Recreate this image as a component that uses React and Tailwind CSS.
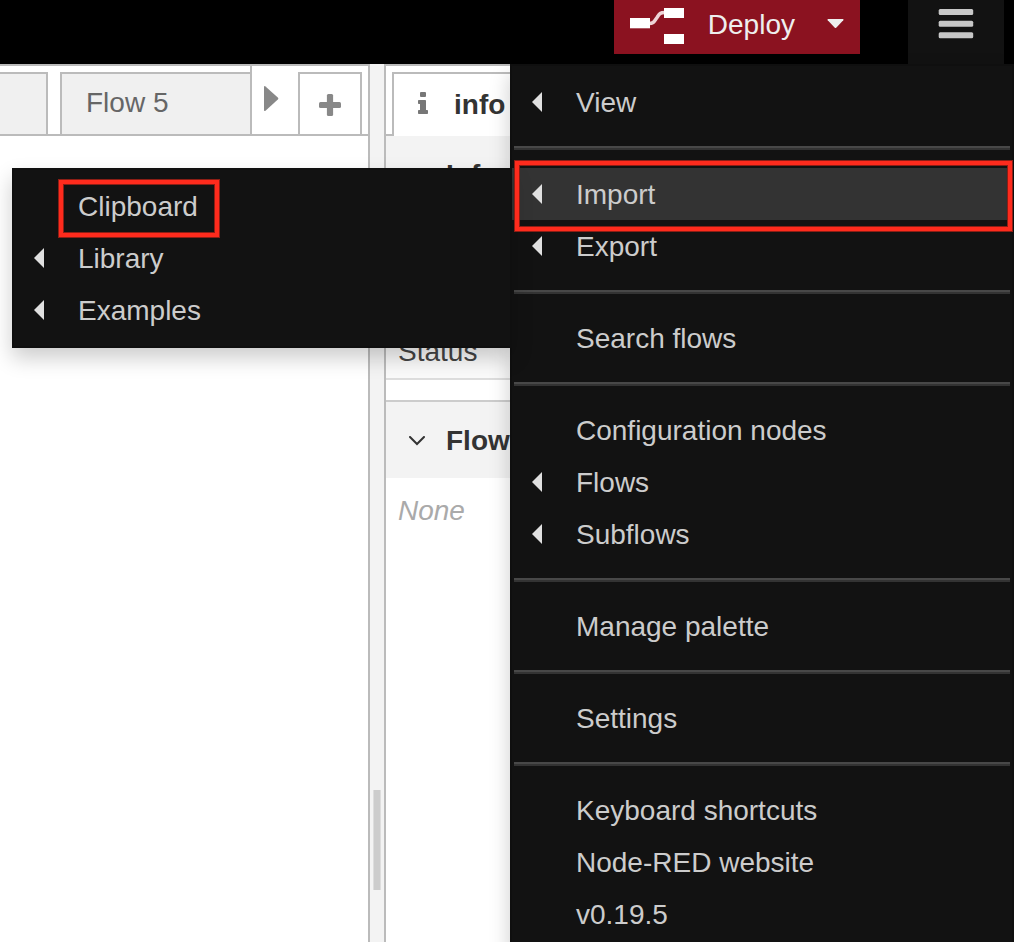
import React from "react";

function LeftArrow() {
  return (
    <svg width="10" height="20" viewBox="0 0 10 20" className="shrink-0" aria-hidden="true">
      <path d="M10 0V20L0 10Z" fill="#e0e0e0" />
    </svg>
  );
}

function MenuItem({ label, arrow, active, marked, children }) {
  return (
    <li role="none" className="relative">
      <button
        type="button"
        role="menuitem"
        className={
          active
            ? "flex h-[52px] w-full items-center bg-[#333333] pl-5 text-left"
            : "flex h-[52px] w-full items-center pl-5 text-left"
        }
      >
        <span className="flex w-11 shrink-0">{arrow && <LeftArrow />}</span>
        <span className="pt-0.5 whitespace-nowrap">{label}</span>
      </button>
      {marked}
      {children}
    </li>
  );
}

function Divider() {
  return (
    <li role="separator" className="mx-0.5 my-[18px] h-1 border-t-2 border-[#484848] bg-[#333333]" />
  );
}

const menuBox = "border-2 border-[#0f0f0f] bg-[#121212] py-2.5 shadow-[0_10px_20px_rgba(0,0,0,0.2)]";

const highlight =
  "pointer-events-none absolute border-4 border-[#fe2b1d] shadow-[0_0_0_1px_#8c1e15,inset_0_0_0_1px_#8c1e15]";

function ImportSubmenu() {
  return (
    <ul role="menu" aria-label="Import" className={"absolute top-0 right-full w-[500px] " + menuBox}>
      <MenuItem label="Clipboard" marked={<span className={highlight + " top-0 left-[45px] h-[57px] w-40"} />} />
      <MenuItem label="Library" arrow />
      <MenuItem label="Examples" arrow />
    </ul>
  );
}

function MainMenu() {
  return (
    <ul
      role="menu"
      aria-label="Main menu"
      className={"absolute top-16 right-0 z-10 w-[504px] text-[#cccccc] " + menuBox}
    >
      <MenuItem label="View" arrow />
      <Divider />
      <MenuItem
        label="Import"
        arrow
        active
        marked={<span className={highlight + " -top-[7px] right-0 left-[3px] z-10 h-[70px]"} />}
      >
        <ImportSubmenu />
      </MenuItem>
      <MenuItem label="Export" arrow />
      <Divider />
      <MenuItem label="Search flows" />
      <Divider />
      <MenuItem label="Configuration nodes" />
      <MenuItem label="Flows" arrow />
      <MenuItem label="Subflows" arrow />
      <Divider />
      <MenuItem label="Manage palette" />
      <Divider />
      <MenuItem label="Settings" />
      <Divider />
      <MenuItem label="Keyboard shortcuts" />
      <MenuItem label="Node-RED website" />
      <MenuItem label="v0.19.5" />
    </ul>
  );
}

function Header() {
  return (
    <header className="flex h-16 shrink-0 items-start justify-end bg-black pr-2.5">
      <button type="button" className="flex h-[54px] items-center bg-[#8b1220] px-4 pb-1.5 text-[#eeeeee]">
        <svg width="54" height="40" viewBox="0 0 54 40" aria-hidden="true">
          <path d="M19 19.500C24 19.500 24 17.500 27 13.500C29.500 9.500 30 8.500 35 8.500" fill="none" stroke="#eed3d6" strokeWidth="3.500" />
          <rect x="0" y="14" width="20" height="10.300" fill="#fff" />
          <rect x="34" y="4" width="20" height="10" fill="#fff" />
          <rect x="34" y="30" width="20" height="10" fill="#fff" />
        </svg>
        <span className="ml-6 pt-0.5">Deploy</span>
        <svg width="17" height="10" viewBox="0 0 17 10" className="ml-8" aria-hidden="true">
          <path d="M1 0H16Q17 .3 16.300 1.200L9.200 8.800Q8.500 9.400 7.800 8.800L.7 1.200Q0 .3 1 0Z" fill="#eee" />
        </svg>
      </button>
      <button
        type="button"
        aria-label="Menu"
        className="ml-12 flex h-16 w-24 items-center justify-center bg-[#121212] pb-4"
      >
        <svg width="36" height="30" viewBox="0 0 36 30" fill="#c7c7c7" aria-hidden="true">
          <rect x="0.700" y="0" width="34.500" height="6" rx="1.500" />
          <rect x="0.700" y="11.700" width="34.500" height="6" rx="1.500" />
          <rect x="0.700" y="23.200" width="34.500" height="6" rx="1.500" />
        </svg>
      </button>
    </header>
  );
}

function Workspace() {
  return (
    <main className="flex min-w-0 flex-1 flex-col border-t-2 border-r-2 border-[#bbbbbb]">
      <div className="flex h-[70px] border-b-2 border-[#bbbbbb]">
        <button
          type="button"
          aria-label="Previous flow"
          className="mt-1.5 w-12 border-t-2 border-r-2 border-[#bbbbbb] bg-[#f0f0f0]"
        />
        <button
          type="button"
          className="mt-1.5 ml-3 flex min-w-0 flex-1 items-center border-t-2 border-l-2 border-[#bbbbbb] bg-[#f0f0f0] pb-0.5 pl-6 text-[#666666]"
        >
          Flow 5
        </button>
        <button
          type="button"
          aria-label="Scroll tabs right"
          className="flex w-12 items-center border-l-2 border-[#bbbbbb] pl-3"
        >
          <svg width="15" height="28" viewBox="0 0 15 28" aria-hidden="true">
            <path d="M0 1.200Q0 -.6 1.500 .5L13.800 11.500Q14.800 12.500 13.800 13.500L1.500 24.700Q0 25.500 0 23.900Z" fill="#888" />
          </svg>
        </button>
        <button
          type="button"
          aria-label="Add flow"
          className="mt-1.5 mr-1.5 flex w-16 items-center justify-center border-x-2 border-t-2 border-[#bbbbbb] pt-0.5"
        >
          <svg width="22" height="22" viewBox="0 0 22 22" fill="#888" aria-hidden="true">
            <rect x="0" y="7.900" width="22" height="6.200" rx="1.500" />
            <rect x="7.900" y="0" width="6.200" height="22" rx="1.500" />
          </svg>
        </button>
      </div>
    </main>
  );
}

function Sidebar() {
  return (
    <aside className="flex w-[630px] shrink-0 flex-col border-l-2 border-[#bbbbbb] text-[#333333]">
      <div className="flex h-[72px] border-t-2 border-[#bbbbbb]">
        <div className="w-1.5 border-b-2 border-[#bbbbbb]" />
        <button
          type="button"
          className="mt-1.5 flex flex-1 items-center border-t-2 border-l-2 border-[#bbbbbb] pb-1 pl-6 font-bold"
        >
          <svg width="10" height="22" viewBox="0 0 10 22" fill="#777" aria-hidden="true">
            <rect x="2" y="0" width="6" height="5" rx="1" />
            <path d="M.8 8H7.200Q8 8 8 8.800V18H9.200Q10 18 10 18.800V21.200Q10 22 9.200 22H.8Q0 22 0 21.200V18.800Q0 18 .8 18H2V12H.8Q0 12 0 11.200V8.800Q0 8 .8 8Z" />
          </svg>
          <span className="ml-[26px] pt-1">info</span>
        </button>
      </div>
      <h2 className="flex h-[76px] items-center bg-[#f3f3f3] pt-0.5 pl-[60px] font-bold">Info</h2>
      <div className="flex h-[168px] items-end border-b-2 border-[#dddddd] bg-[#fafafa] pb-1.5 pl-3 text-[#444444]">
        Status
      </div>
      <h2 className="mt-5 flex h-[78px] items-center border-t-2 border-[#cccccc] bg-[#f3f3f3] pt-0.5 pl-[23px] font-bold">
        <svg width="16" height="10" viewBox="0 0 16 10" className="mr-[21px]" aria-hidden="true">
          <path d="M1 1L8 8L15 1" fill="none" stroke="#333" strokeWidth="2" strokeLinecap="round" />
        </svg>
        Flow
      </h2>
      <p className="px-3 pt-[13px] text-[#aaaaaa] italic">None</p>
    </aside>
  );
}

export default function App() {
  return (
    <div className="relative flex h-screen flex-col overflow-hidden bg-white font-['Liberation_Sans',Arial,sans-serif] text-[28px] leading-10">
      <Header />
      <div className="flex flex-1">
        <Workspace />
        <div className="flex w-3.5 shrink-0 items-end justify-center bg-[#f3f3f3] pb-[52px]">
          <div className="h-[100px] w-2 border-x border-[#dddddd] bg-[#cccccc]" />
        </div>
        <Sidebar />
      </div>
      <MainMenu />
    </div>
  );
}
